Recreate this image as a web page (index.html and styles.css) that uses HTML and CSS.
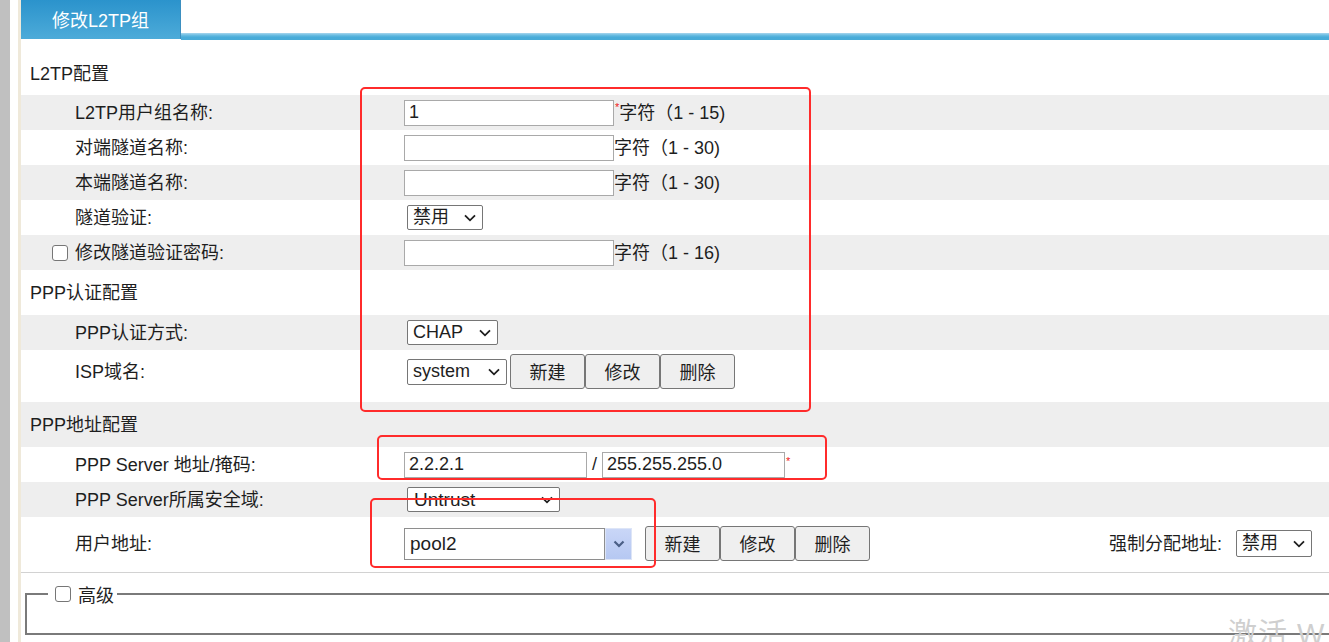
FILE: index.html
```html
<!DOCTYPE html>
<html lang="zh-CN">
<head>
<meta charset="utf-8">
<title>修改L2TP组</title>
<link rel="stylesheet" href="styles.css">
</head>
<body>
<div class="page">
  <div class="strip"></div>
  <div class="gutter"></div>
  <div class="main">
    <div class="tabbar">
      <div class="tab">修改L2TP组</div>
      <div class="tabline"></div>
    </div>

    <div class="sec sec-first">L2TP配置</div>
    <div class="row gray">
      <div class="lbl">L2TP用户组名称:</div>
      <div class="val"><input class="txt" type="text" value="1"><span class="req">*</span><span class="hint">字符（1 - 15)</span></div>
    </div>
    <div class="row">
      <div class="lbl">对端隧道名称:</div>
      <div class="val"><input class="txt" type="text" value=""><span class="hint">字符（1 - 30)</span></div>
    </div>
    <div class="row gray">
      <div class="lbl">本端隧道名称:</div>
      <div class="val"><input class="txt" type="text" value=""><span class="hint">字符（1 - 30)</span></div>
    </div>
    <div class="row">
      <div class="lbl">隧道验证:</div>
      <div class="val"><span class="selwrap"><select class="sel w76"><option>禁用</option></select><svg class="chev" width="12" height="8" viewBox="0 0 12 8"><path d="M1 1.3 L6 6.3 L11 1.3" fill="none" stroke="#1e1e1e" stroke-width="1.8"/></svg></span></div>
    </div>
    <div class="row gray">
      <div class="lbl lbl-cb"><input class="cb" type="checkbox">修改隧道验证密码:</div>
      <div class="val"><input class="txt" type="text" value=""><span class="hint">字符（1 - 16)</span></div>
    </div>

    <div class="sec">PPP认证配置</div>
    <div class="row gray">
      <div class="lbl">PPP认证方式:</div>
      <div class="val"><span class="selwrap"><select class="sel w91"><option>CHAP</option></select><svg class="chev" width="12" height="8" viewBox="0 0 12 8"><path d="M1 1.3 L6 6.3 L11 1.3" fill="none" stroke="#1e1e1e" stroke-width="1.8"/></svg></span></div>
    </div>
    <div class="row row-isp">
      <div class="lbl">ISP域名:</div>
      <div class="val"><span class="selwrap"><select class="sel w100 sel-tall"><option>system</option></select><svg class="chev" width="12" height="8" viewBox="0 0 12 8"><path d="M1 1.3 L6 6.3 L11 1.3" fill="none" stroke="#1e1e1e" stroke-width="1.8"/></svg></span><span class="btns"><button class="btn" type="button">新建</button><button class="btn" type="button">修改</button><button class="btn" type="button">删除</button></span></div>
    </div>

    <div class="sec gray">PPP地址配置</div>
    <div class="row">
      <div class="lbl">PPP Server 地址/掩码:</div>
      <div class="val"><input class="txt w183" type="text" value="2.2.2.1"><span class="slash">/</span><input class="txt w183" type="text" value="255.255.255.0"><span class="req">*</span></div>
    </div>
    <div class="row gray">
      <div class="lbl">PPP Server所属安全域:</div>
      <div class="val"><span class="selwrap"><select class="sel w153 sel-untrust"><option>Untrust</option></select><svg class="chev" width="12" height="8" viewBox="0 0 12 8"><path d="M1 1.3 L6 6.3 L11 1.3" fill="none" stroke="#1e1e1e" stroke-width="1.8"/></svg></span></div>
    </div>
    <div class="row row-pool">
      <div class="lbl">用户地址:</div>
      <div class="val">
        <span class="combo"><input class="combo-in" type="text" value="pool2"><span class="combo-btn"><svg width="12" height="8" viewBox="0 0 12 8"><path d="M1.5 1.5 L6 6 L10.5 1.5" fill="none" stroke="#4a5f86" stroke-width="2.2"/></svg></span></span>
        <span class="btns btns-pool"><button class="btn" type="button">新建</button><button class="btn" type="button">修改</button><button class="btn" type="button">删除</button></span>
      </div>
      <div class="force"><span class="force-lbl">强制分配地址:</span><span class="selwrap"><select class="sel w76 sel-force"><option>禁用</option></select><svg class="chev" width="12" height="8" viewBox="0 0 12 8"><path d="M1 1.3 L6 6.3 L11 1.3" fill="none" stroke="#1e1e1e" stroke-width="1.8"/></svg></span></div>
    </div>

    <fieldset class="adv">
      <legend class="adv-legend"><input class="cb" type="checkbox">高级</legend>
    </fieldset>
  </div>

  <div class="mark mark1"></div>
  <div class="mark mark2"></div>
  <div class="mark mark3"></div>
  <div class="watermark">激活 W</div>
</div>
</body>
</html>
```
FILE: styles.css
```css
html, body {
  margin: 0;
  padding: 0;
  background: #fff;
}
body {
  font-family: "Liberation Sans", "Noto Sans CJK SC", sans-serif;
  font-size: 18px;
  color: #1e1e1e;
  overflow: hidden;
}
.page {
  position: relative;
  display: flex;
  width: 1329px;
  height: 642px;
  overflow: hidden;
}
.strip {
  width: 10px;
  flex: none;
  background: #c0c0c0;
}
.gutter {
  width: 8px;
  flex: none;
  background: #fff;
  border-right: 3px solid #efe9da;
}
.main {
  flex: 1;
  min-width: 0;
  display: flex;
  flex-direction: column;
}

/* tab bar */
.tabbar {
  display: flex;
  height: 40px;
  flex: none;
}
.tab {
  width: 160px;
  height: 39px;
  flex: none;
  box-sizing: border-box;
  display: flex;
  align-items: center;
  justify-content: center;
  padding-bottom: 2px;
  color: #fff;
  font-size: 18px;
  background: linear-gradient(#2b93cc, #4dabd9);
  border-right: 1px solid #3b8fc0;
}
.tabline {
  flex: 1;
  align-self: flex-end;
  height: 7px;
  background: linear-gradient(#a9d6ee 0, #6cbde2 30%, #49acd9 60%, #48abd8 100%);
}

/* sections */
.sec {
  height: 45px;
  box-sizing: border-box;
  display: flex;
  align-items: center;
  padding-left: 9px;
  padding-bottom: 3px;
  flex: none;
}
.sec-first {
  height: 55px;
  padding-top: 12px;
}

/* rows */
.row {
  display: flex;
  align-items: center;
  height: 35px;
  flex: none;
}
.gray {
  background: #eeeeee;
}
.lbl {
  width: 383px;
  flex: none;
  box-sizing: border-box;
  padding-left: 54px;
  padding-bottom: 3px;
  display: flex;
  align-items: center;
  white-space: nowrap;
}
.lbl-cb {
  padding-left: 31px;
}
.lbl-cb .cb {
  margin-top: 3px;
}
.val {
  display: flex;
  align-items: center;
}
.row-isp {
  height: 52px;
  box-sizing: border-box;
  padding-top: 4px;
  padding-bottom: 13px;
}
.row-pool {
  height: 56px;
  box-sizing: border-box;
  padding-top: 9px;
  padding-bottom: 11px;
  border-bottom: 1px solid #d2d2d2;
}

/* controls */
.txt {
  width: 210px;
  height: 26px;
  box-sizing: border-box;
  margin: 0;
  padding: 0 4px;
  border: 1px solid #a9a9a9;
  background: #fff;
  font-family: inherit;
  font-size: 18px;
  color: #1e1e1e;
  outline: none;
}
.w183 {
  width: 183px;
}
.req {
  color: #f02020;
  font-size: 11px;
  align-self: flex-start;
  margin-top: 3px;
  margin-left: 1px;
}
.hint {
  white-space: nowrap;
  padding-bottom: 3px;
}
.slash {
  width: 15px;
  text-align: center;
}
.selwrap {
  position: relative;
  display: inline-flex;
  margin-left: 3px;
}
.sel {
  appearance: none;
  -webkit-appearance: none;
  margin: 0;
  height: 25px;
  box-sizing: border-box;
  border: 1px solid #767676;
  border-radius: 2px;
  background: #fff;
  font-family: inherit;
  font-size: 18px;
  color: #1e1e1e;
  padding: 0 0 0 5px;
  line-height: 23px;
}
.chev {
  position: absolute;
  right: 7px;
  top: 50%;
  margin-top: -4px;
  pointer-events: none;
}
.sel-tall {
  height: 26px;
}
.sel-untrust {
  font-size: 19px;
  padding-left: 6px;
}
.w76 { width: 76px; }
.w91 { width: 91px; }
.w100 { width: 100px; }
.w153 { width: 153px; }

.btns {
  display: flex;
  margin-left: 3px;
}
.btn {
  width: 75px;
  height: 35px;
  box-sizing: border-box;
  margin: 0;
  padding: 0 0 2px;
  border: 1px solid #767676;
  border-radius: 3px;
  background: #efefef;
  font-family: inherit;
  font-size: 18px;
  color: #1e1e1e;
}
.btns-pool {
  margin-left: 13px;
}

.combo {
  display: flex;
  align-items: stretch;
  height: 32px;
}
.combo-in {
  width: 201px;
  height: 32px;
  box-sizing: border-box;
  margin: 0;
  padding: 0 5px;
  border: 1px solid #8e8e8e;
  font-family: inherit;
  font-size: 19px;
  color: #1e1e1e;
  outline: none;
}
.combo-btn {
  width: 27px;
  box-sizing: border-box;
  display: flex;
  align-items: center;
  justify-content: center;
  border: 1px solid #dde5f7;
  background: linear-gradient(#c9d6f7, #b6c8f2);
}

.force {
  margin-left: auto;
  margin-right: 17px;
  display: flex;
  align-items: center;
}
.force-lbl {
  margin-right: 11px;
  padding-bottom: 3px;
}
.sel-force {
  height: 27px;
}

.cb {
  appearance: none;
  -webkit-appearance: none;
  width: 16px;
  height: 16px;
  margin: 0 7px 0 0;
  box-sizing: border-box;
  border: 1px solid #767676;
  border-radius: 3px;
  background: #fff;
  flex: none;
}

/* advanced fieldset */
.adv {
  margin: 10px 0 0 4px;
  width: 1400px;
  height: 52px;
  box-sizing: border-box;
  padding: 0;
  border: 2px solid #7a7a7a;
  flex: none;
}
.adv-legend {
  margin-left: 21px;
  padding: 0 3px 0 7px;
  display: flex;
  align-items: center;
  height: 22px;
}
.adv-legend .cb {
  margin-right: 7px;
}

/* red annotation frames */
.mark {
  position: absolute;
  border: 2px solid #ff2b2b;
  border-radius: 5px;
  box-sizing: border-box;
  pointer-events: none;
}
.mark1 { left: 360px; top: 87px; width: 451px; height: 325px; }
.mark2 { left: 377px; top: 435px; width: 450px; height: 45px; }
.mark3 { left: 370px; top: 498px; width: 286px; height: 70px; }

.watermark {
  position: absolute;
  left: 1228px;
  top: 610px;
  font-size: 29px;
  color: #cfcfcf;
  white-space: nowrap;
  letter-spacing: 1px;
}
```
